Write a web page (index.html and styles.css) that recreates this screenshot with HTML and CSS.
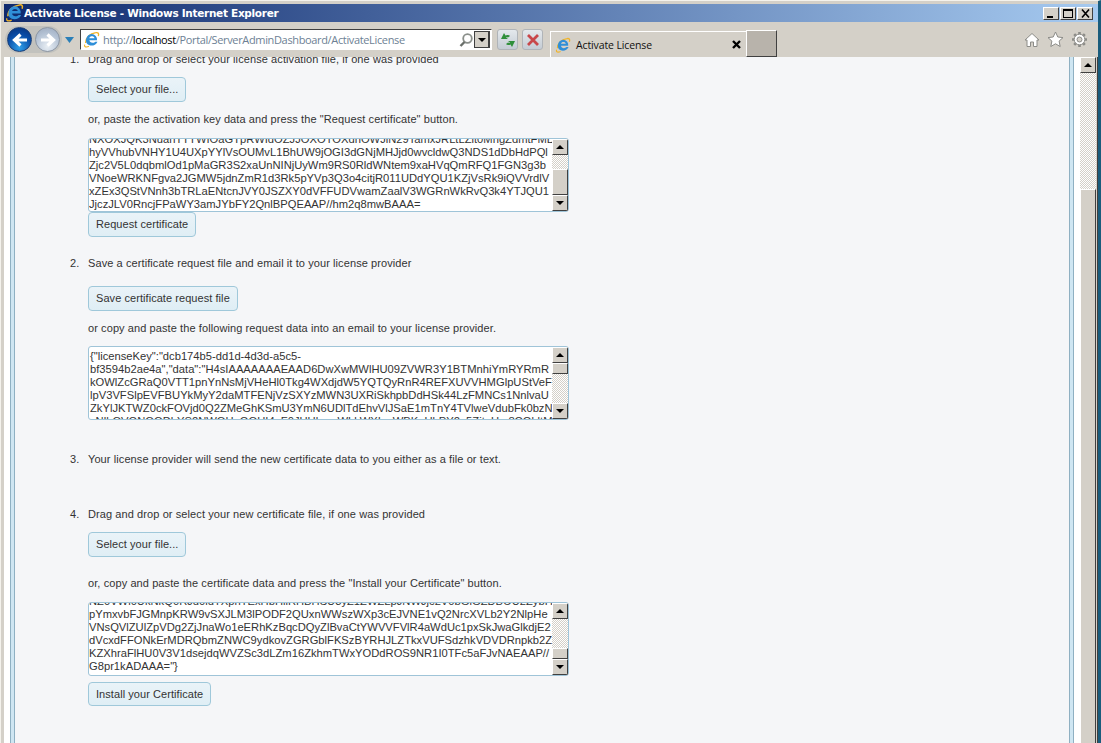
FILE: index.html
```html
<!DOCTYPE html>
<html lang="en">
<head>
<meta charset="utf-8">
<title>Activate License - Windows Internet Explorer</title>
<link rel="stylesheet" href="styles.css">
</head>
<body>
<svg class="defs" width="0" height="0" aria-hidden="true">
  <defs>
    <symbol id="ie" viewBox="0 0 20 20">
      <path d="M3 14C3 8 8 3 15 2c3-.6 4 1 3 4" fill="none" stroke="#f0b429" stroke-width="1.600"/>
      <path d="M10 3.500a6.500 6.500 0 0 1 6.500 7.500H7.500c.2 3 4.500 4 7 1.500h2.500C15 17.500 8 18.500 4.800 15 2 11.500 4 4 10 3.500zM7.500 8.500h6c-.5-3-5.500-3-6 0z" fill="#2f8fd8"/>
      <path d="M2 16c-1 3 2 3.500 5 2" fill="none" stroke="#f0b429" stroke-width="1.400"/>
    </symbol>
  </defs>
</svg>
<div class="window">
  <header class="titlebar">
    <svg class="title-icon"><use href="#ie"/></svg>
    <span class="title-text">Activate License - Windows Internet Explorer</span>
    <div class="win-btns">
      <span class="win-btn"><i class="g-min"></i></span>
      <span class="win-btn"><i class="g-max"></i></span>
      <span class="win-btn win-close"><svg width="11" height="11" viewBox="0 0 11 11"><path d="M2 1.500l7 8M9 1.500l-7 8" stroke="#000" stroke-width="1.600"/></svg></span>
    </div>
  </header>
  <nav class="toolbar">
    <div class="nav-pill">
      <span class="nav-btn nav-back"><svg width="22" height="22" viewBox="0 0 22 22"><path d="M18 11H7M11.500 5.500L5.500 11l6 5.500" fill="none" stroke="#fff" stroke-width="3.200"/></svg></span>
      <span class="nav-btn nav-fwd"><svg width="22" height="22" viewBox="0 0 22 22"><path d="M4 11h11M10.500 5.500l6 5.500-6 5.500" fill="none" stroke="#fff" stroke-width="3.200"/></svg></span>
    </div>
    <svg class="nav-drop" width="9" height="6" viewBox="0 0 9 6"><path d="M0 0h9L4.500 6z" fill="#2a7fb8"/></svg>
    <div class="address">
      <svg class="addr-icon"><use href="#ie"/></svg>
      <span class="addr-url"><span class="dim">http://</span>localhost<span class="dim">/Portal/ServerAdminDashboard/ActivateLicense</span></span>
      <svg class="addr-search" width="16" height="16" viewBox="0 0 16 16"><circle cx="9.500" cy="6.500" r="4.300" fill="none" stroke="#8a8f8a" stroke-width="1.800"/><path d="M6.500 10l-4 4" stroke="#6a6f6a" stroke-width="2.400"/></svg>
      <span class="addr-drop"><i class="tri-down"></i></span>
    </div>
    <span class="tool-btn"><svg width="18" height="18" viewBox="0 0 18 18"><path d="M2 8l3-6 1.500 2.500C8 3.500 10 4 11 5L9 6.500C8 6 7.500 6 7 6.500L9 8zM16 10l-3 6-1.500-2.500C10 14.500 8 14 7 13l2-1.500c1 .5 1.500.5 2 0L9 10z" fill="#2f8f3a"/></svg></span>
    <span class="tool-btn"><svg width="16" height="16" viewBox="0 0 16 16"><path d="M3 3l10 10M13 3L3 13" stroke="#c8474a" stroke-width="2.800"/></svg></span>
    <div class="tab">
      <svg class="tab-icon"><use href="#ie"/></svg>
      <span class="tab-text">Activate License</span>
      <svg class="tab-close" width="9" height="9" viewBox="0 0 9 9"><path d="M1 1l7 7M8 1L1 8" stroke="#000" stroke-width="2.400"/></svg>
    </div>
    <span class="new-tab"></span>
    <div class="cmds">
      <svg width="16" height="16" viewBox="0 0 16 16"><path d="M8 1.500L1 8h2v6.500h3.500V10h3v4.500H13V8h2z" fill="#fff" stroke="#8c8c88"/></svg>
      <svg width="17" height="17" viewBox="0 0 17 17"><path d="M8.500 1l2.300 5 5.200.6-3.900 3.500 1.100 5.400-4.700-2.700-4.700 2.700 1.100-5.400L1 6.600 6.200 6z" fill="#fff" stroke="#8c8c88"/></svg>
      <svg width="17" height="17" viewBox="0 0 17 17"><path d="M8.500 1v2.500M8.500 13.500V16M1 8.500h2.500M13.500 8.500H16M3.200 3.200L5 5M12 12l1.800 1.800M13.800 3.200L12 5M5 12l-1.800 1.800" stroke="#8c8c88" stroke-width="2.600"/><circle cx="8.500" cy="8.500" r="5.300" fill="#fff" stroke="#8c8c88"/><circle cx="8.500" cy="8.500" r="2.500" fill="#d4d0c8" stroke="#8c8c88"/></svg>
    </div>
  </nav>
  <div class="viewport">
    <main class="page">
      <div class="frame">
        <div class="content">
          <ol class="steps">
            <li class="step step-one">
              <p class="lead">Drag and drop or select your license activation file, if one was provided</p>
              <button class="btn btn-after-lead">Select your file...</button>
              <p class="note">or, paste the activation key data and press the "Request certificate" button.</p>
              <div class="textbox textbox-a">
                <div class="tb-text tb-text-a">NXOXJQK3NuanTTTWIOaGTpRWIdOZJJOXOTOXdnOWJlN29TamxJRLtLZlt0MngZdmtFMD
hyVVhubVNHY1U4UXpYYlVsOUMvL1BhUW9jOGI3dGNjMHJjd0wvcldwQ3NDS1dDbHdPQl
Zjc2V5L0dqbmlOd1pMaGR3S2xaUnNINjUyWm9RS0RldWNtem9xaHVqQmRFQ1FGN3g3b
VNoeWRKNFgva2JGMW5jdnZmR1d3Rk5pYVp3Q3o4citjR011UDdYQU1KZjVsRk9iQVVrdlV
xZEx3QStVNnh3bTRLaENtcnJVY0JSZXY0dVFFUDVwamZaalV3WGRnWkRvQ3k4YTJQU1
JjczJLV0RncjFPaWY3amJYbFY2QnlBPQEAAP//hm2q8mwBAAA=</div>
                <div class="vscroll"><span class="sb-btn"><i class="tri-up"></i></span><span class="sb-track sb-track-a"></span><span class="sb-thumb sb-thumb-a"></span><span class="sb-btn"><i class="tri-down"></i></span></div>
              </div>
              <button class="btn">Request certificate</button>
            </li>
            <li class="step step-two">
              <p class="lead">Save a certificate request file and email it to your license provider</p>
              <button class="btn btn-save">Save certificate request file</button>
              <p class="note note-save">or copy and paste the following request data into an email to your license provider.</p>
              <div class="textbox textbox-b">
                <div class="tb-text tb-text-b">{"licenseKey":"dcb174b5-dd1d-4d3d-a5c5-
bf3594b2ae4a","data":"H4sIAAAAAAAEAAD6DwXwMWlHU09ZVWR3Y1BTMnhiYmRYRmR
kOWlZcGRaQ0VTT1pnYnNsMjVHeHl0Tkg4WXdjdW5YQTQyRnR4REFXUVVHMGlpUStVeF
lpV3VFSlpEVFBUYkMyY2daMTFENjVzSXYzMWN3UXRiSkhpbDdHSk44LzFMNCs1NnlvaU
ZkYlJKTWZ0ckFOVjd0Q2ZMeGhKSmU3YmN6UDlTdEhvVlJSaE1mTnY4TVlweVdubFk0bzN
cNlhOVGNQQDbYS2NWQHpGQUI4aF0JUUlxwvWLkWXIvoWBKpUbPY2a5ZitpUm8CGldtMj</div>
                <div class="vscroll"><span class="sb-btn"><i class="tri-up"></i></span><span class="sb-thumb sb-thumb-b"></span><span class="sb-track sb-track-b"></span><span class="sb-btn"><i class="tri-down"></i></span></div>
              </div>
            </li>
            <li class="step step-three">
              <p class="lead">Your license provider will send the new certificate data to you either as a file or text.</p>
            </li>
            <li class="step step-four">
              <p class="lead">Drag and drop or select your new certificate file, if one was provided</p>
              <button class="btn btn-after-lead">Select your file...</button>
              <p class="note">or, copy and paste the certificate data and press the "Install your Certificate" button.</p>
              <div class="textbox textbox-c">
                <div class="tb-text tb-text-c">NZ0VWl0UkNkQ0RJd0ldTXpnTExHbHllRHBHSU3yZ1ZWZLpJNWJjc2V0bGlGZDBOU2ZybHI
pYmxvbFJGMnpKRW9vSXJLM3lPODF2QUxnWWszWXp3cEJVNE1vQ2NrcXVLb2Y2NlpHe
VNsQVlZUlZpVDg2ZjJnaWo1eERhKzBqcDQyZlBvaCtYWVVFVlR4aWdUc1pxSkJwaGlkdjE2
dVcxdFFONkErMDRQbmZNWC9ydkovZGRGblFKSzBYRHJLZTkxVUFSdzhkVDVDRnpkb2Z
KZXhraFlHU0V3V1dsejdqWVZSc3dLZm16ZkhmTWxYODdROS9NR1I0TFc5aFJvNAEAAP//
G8pr1kADAAA="}</div>
                <div class="vscroll"><span class="sb-btn"><i class="tri-up"></i></span><span class="sb-track sb-track-c"></span><span class="sb-thumb sb-thumb-c"></span><span class="sb-btn"><i class="tri-down"></i></span></div>
              </div>
              <button class="btn btn-install">Install your Certificate</button>
            </li>
          </ol>
        </div>
      </div>
    </main>
    <aside class="page-scroll">
      <span class="sb-btn"><i class="tri-up"></i></span>
      <span class="sb-track page-track"></span>
      <span class="sb-thumb page-thumb"></span>
    </aside>
  </div>
</div>
</body>
</html>
```

FILE: styles.css
```css
* { box-sizing: border-box; }
html, body { margin: 0; height: 100%; overflow: hidden; }
body { font-family: "Liberation Sans", Arial, sans-serif; font-size: 11px; color: #333; background: #d4d0c8; }
.defs { position: absolute; }

.window { width: 1101px; height: 743px; display: flex; flex-direction: column; background: #d4d0c8; border-top: 1px solid #f4f2ec; border-left: 1px solid #f4f2ec; border-right: 3px solid #1a5c7c; padding: 3px 0 0 3px; }

.titlebar { height: 18px; flex: none; display: flex; align-items: center; background: linear-gradient(90deg, #0f2a6e, #a6caf0); color: #fff; }
.title-icon { width: 19px; height: 19px; flex: none; margin-left: 1px; position: relative; top: -1px; }
.title-text { font-family: "DejaVu Sans", sans-serif; font-weight: 700; font-size: 10.500px; letter-spacing: -.3px; }
.win-btns { margin-left: auto; display: flex; gap: 1px; margin-right: 5px; margin-top: 1px; }
.win-btn { width: 16px; height: 13px; background: #d4d0c8; border: 1px solid; border-color: #fff #404040 #404040 #fff; display: flex; align-items: center; justify-content: center; }
.g-min { width: 6px; height: 2px; background: #000; margin-top: 6px; margin-right: 2px; }
.g-max { width: 10px; height: 9px; border: 1px solid #000; border-top-width: 2px; }

.toolbar { height: 35px; flex: none; display: flex; align-items: center; background: #d4d0c8; }
.nav-pill { display: flex; align-items: center; gap: 3px; width: 57px; height: 27px; margin-left: 1px; border-radius: 14px; background: #c2c2be; padding-left: 2px; flex: none; }
.nav-btn { width: 25px; height: 25px; border-radius: 50%; display: flex; align-items: center; justify-content: center; flex: none; }
.nav-back { background: radial-gradient(circle at 50% 85%, #2f9fe8, #0a4ea8 55%, #062f78); border: 1px solid #1b3f78; }
.nav-fwd { background: radial-gradient(circle at 50% 80%, #e8eef4, #b4c2d4 60%, #9aa8bc); border: 1px solid #8c96a4; }
.nav-drop { margin-left: 3px; flex: none; }
.address { width: 412px; height: 21px; margin-left: 6px; background: #fff; border: 1px solid; border-color: #404040 #fff #fff #404040; display: flex; align-items: center; padding-left: 2px; padding-right: 1px; flex: none; }
.addr-icon { width: 17px; height: 17px; flex: none; }
.addr-url { font-family: "Open Sans", "DejaVu Sans", sans-serif; font-size: 11px; color: #000; margin-left: 3px; white-space: nowrap; letter-spacing: -.35px; }
.dim { color: #6d7f94; }
.addr-search { margin-left: auto; flex: none; }
.addr-drop { width: 16px; height: 17px; background: #d4d0c8; border: 1px solid #404040; border-right-width: 2px; display: flex; align-items: center; justify-content: center; flex: none; }
.tool-btn { width: 21px; height: 21px; margin-left: 5px; background: linear-gradient(#e4e8ec, #c4ccd4); border: 1px solid #b0b4b8; border-radius: 3px; display: flex; align-items: center; justify-content: center; flex: none; }
.tool-btn + .tool-btn { margin-left: 4px; }
.tab { align-self: flex-end; width: 196px; height: 26px; margin-left: 7px; background: #d4d0c8; border-top: 1px solid #fff; border-left: 1px solid #fff; display: flex; align-items: center; padding-left: 4px; flex: none; }
.tab-icon { width: 16px; height: 16px; flex: none; }
.tab-text { font-family: "Open Sans", "DejaVu Sans", sans-serif; font-size: 10.500px; color: #111; margin-left: 5px; letter-spacing: -.12px; }
.tab-close { margin-left: auto; margin-right: 5px; flex: none; }
.new-tab { align-self: flex-end; width: 31px; height: 27px; background: #b8b3ab; border: 1px solid; border-color: #fff #404040 #404040 #fff; flex: none; }
.cmds { margin-left: auto; margin-right: 10px; display: flex; align-items: center; gap: 7px; }

.viewport { flex: 1; min-height: 0; display: flex; overflow: hidden; background: #d4d0c8; border-right: 1px solid #404040; }
.page { flex: 1; min-width: 0; padding: 0 6px; background: #fff; overflow: hidden; }
.frame { height: 100%; background: #cfe6f2; border-left: 1px solid #8fb0c2; border-right: 1px solid #8fb0c2; padding: 0 3px; }
.content { height: 100%; background: #f5f6f8; border-left: 1px solid #8fb0c2; border-right: 1px solid #8fb0c2; overflow: hidden; }

.steps { margin: -4px 0 0; padding: 0 0 0 55px; font-size: 11px; line-height: 13px; list-style: none; counter-reset: step; }
.step { padding-left: 18px; counter-increment: step; }
.step::before { content: counter(step) "."; float: left; width: 18px; margin-left: -18px; line-height: 13px; color: #333; }
.lead, .note { margin: 0; height: 13px; color: #333; letter-spacing: .09px; white-space: nowrap; }

.btn { display: block; height: 25px; padding: 0 7px 2px; background: linear-gradient(#eaf3f8, #dfeef5); border: 1px solid #9fc8da; border-radius: 4px; font: 11px "Liberation Sans", Arial, sans-serif; color: #333; letter-spacing: .06px; }
.btn-after-lead { margin-top: 11px; }
.btn-save { margin-top: 16px; }
.btn-install { margin-top: 6px; height: 24px; padding-bottom: 0; }
.note { margin-top: 11px; }
.step-four .note { margin-top: 20px; }

.step-two { margin-top: 20px; }
.step-three { margin-top: 33px; }
.step-four { margin-top: 42px; }

.textbox { width: 481px; height: 74px; margin-top: 12px; background: #fff; border: 1px solid #9fc4d8; border-radius: 3px; display: flex; overflow: hidden; }
.textbox-b { margin-top: 11px; }
.tb-text { flex: 1; min-width: 0; white-space: pre; overflow: hidden; color: #333; font-size: 11.200px; line-height: 13px; }
.tb-text-a { margin-top: -6px; }
.tb-text-b { margin-top: 3px; padding-left: 1px; }
.tb-text-c { margin-top: -8px; }
.vscroll { width: 16px; flex: none; display: flex; flex-direction: column; background: #d4d0c8; }
.sb-btn { width: 16px; height: 16px; flex: none; background: #d4d0c8; border: 1px solid; border-color: #fff #404040 #404040 #fff; display: flex; align-items: center; justify-content: center; }
.sb-track { display: block; flex: none; background: repeating-conic-gradient(#fff 0 25%, #d4d0c8 0 50%) 0 0 / 2px 2px; }
.sb-thumb { display: block; flex: none; background: #d4d0c8; border: 1px solid; border-color: #fff #404040 #404040 #fff; }
.sb-track-a { height: 14px; }
.sb-thumb-a { height: 26px; }
.sb-thumb-b { height: 11px; }
.sb-track-b { height: 29px; }
.sb-track-c { height: 29px; }
.sb-thumb-c { height: 11px; }
.tri-up { width: 0; height: 0; border: 4px solid transparent; border-top: 0; border-bottom-color: #000; }
.tri-down { width: 0; height: 0; border: 4px solid transparent; border-bottom: 0; border-top-color: #000; }

.page-scroll { width: 16px; flex: none; display: flex; flex-direction: column; background: #d4d0c8; margin-right: 1px; }
.page-track { height: 116px; }
.page-thumb { flex: 1; border-bottom: 0; }
```
